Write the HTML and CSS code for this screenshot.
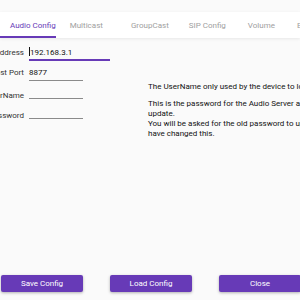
FILE: index.html
```html
<!DOCTYPE html>
<html>
<head>
<meta charset="utf-8">
<link rel="stylesheet" href="styles.css">
</head>
<body>
<div class="page">
  <div class="tabbar">
    <div class="tab active">Audio Config</div>
    <div class="tab">Multicast</div>
    <div class="tab tight-r">GroupCast</div>
    <div class="tab tight-l">SIP Config</div>
    <div class="tab tight-l">Volume</div>
    <div class="tab tight-l">Extras</div>
  </div>
  <div class="content">
    <div class="form">
      <div class="row r1">
        <div class="label">Server Address</div>
        <div class="field focused wide"><span class="caret"></span>192.168.3.1</div>
      </div>
      <div class="row r2">
        <div class="label">Host Port</div>
        <div class="field">8877</div>
      </div>
      <div class="row r3">
        <div class="label">UserName</div>
        <div class="field"></div>
      </div>
      <div class="row r4">
        <div class="label">Password</div>
        <div class="field"></div>
      </div>
    </div>
    <div class="desc">
      <p class="d1">The UserName only used by the device to login to the server.</p>
      <p class="d2">This is the password for the Audio Server and is required for any<br>update.<br>You will be asked for the old password to update it once you<br>have changed this.</p>
    </div>
  </div>
  <div class="footer">
    <button class="btn">Save Config</button>
    <button class="btn">Load Config</button>
    <button class="btn">Close</button>
  </div>
</div>
</body>
</html>
```

FILE: styles.css
```css
html, body {
  margin: 0;
  padding: 0;
  background: #fafafa;
  overflow: hidden;
}
body {
  font-family: Roboto, "Liberation Sans", sans-serif;
  font-size: 8px;
  color: #212121;
}
.page {
  width: 300px;
  height: 300px;
  display: flex;
  flex-direction: column;
  overflow: hidden;
}
.tabbar {
  margin-top: 12px;
  height: 26px;
  background: #fff;
  display: flex;
  align-items: stretch;
  box-shadow: 0 1px 3px rgba(0,0,0,0.08);
  white-space: nowrap;
  flex-shrink: 0;
}
.tab {
  display: flex;
  align-items: center;
  padding: 0 14px;
  color: #a0a0a0;
  border-bottom: 2px solid transparent;
  padding-top: 2px;
}
.tab.active {
  color: #673ab7;
  border-bottom-color: #673ab7;
  padding-left: 10px;
  padding-right: 0;
}
.tab.tight-r {
  padding-right: 8px;
}
.tab.tight-l {
  padding-left: 12px;
  padding-right: 10px;
}
.content {
  display: flex;
  margin-top: 8px;
}
.form {
  width: 184px;
  margin-left: -36px;
  flex-shrink: 0;
}
.row {
  display: flex;
  align-items: flex-end;
  height: 15px;
}
.r1 { margin-top: 0; }
.r2 { margin-top: 5px; }
.r3 { margin-top: 3px; }
.r4 { margin-top: 5px; }
.label {
  width: 60px;
  margin-right: 5px;
  text-align: right;
  white-space: nowrap;
  color: #333;
  line-height: 10px;
  padding-bottom: 3px;
}
.r3 .label, .r4 .label {
  padding-bottom: 0;
  margin-bottom: -2px;
}
.field {
  width: 54px;
  height: 12px;
  line-height: 10px;
  border-bottom: 1px solid #8a8a8a;
  color: #111;
}
.field.wide {
  width: 81px;
}
.field.focused {
  border-bottom: 2px solid #673ab7;
}
.caret {
  display: inline-block;
  width: 1px;
  height: 9px;
  background: #111;
  vertical-align: -1px;
}
.desc {
  width: 220px;
  flex-shrink: 0;
  white-space: nowrap;
  color: #111;
  line-height: 10px;
}
.desc p {
  margin: 0;
}
.desc .d1 { margin-top: 36px; }
.desc .d2 { margin-top: 7px; }
.footer {
  margin-top: auto;
  margin-bottom: 8px;
  display: flex;
  gap: 27px;
  padding-left: 1px;
  flex-shrink: 0;
}
.btn {
  width: 82px;
  height: 17px;
  flex-shrink: 0;
  border: none;
  border-radius: 2px;
  background: #673ab7;
  color: #fff;
  font-family: Roboto, "Liberation Sans", sans-serif;
  font-size: 8px;
  padding: 0;
  box-shadow: 0 1px 3px rgba(0,0,0,0.3);
}
```
